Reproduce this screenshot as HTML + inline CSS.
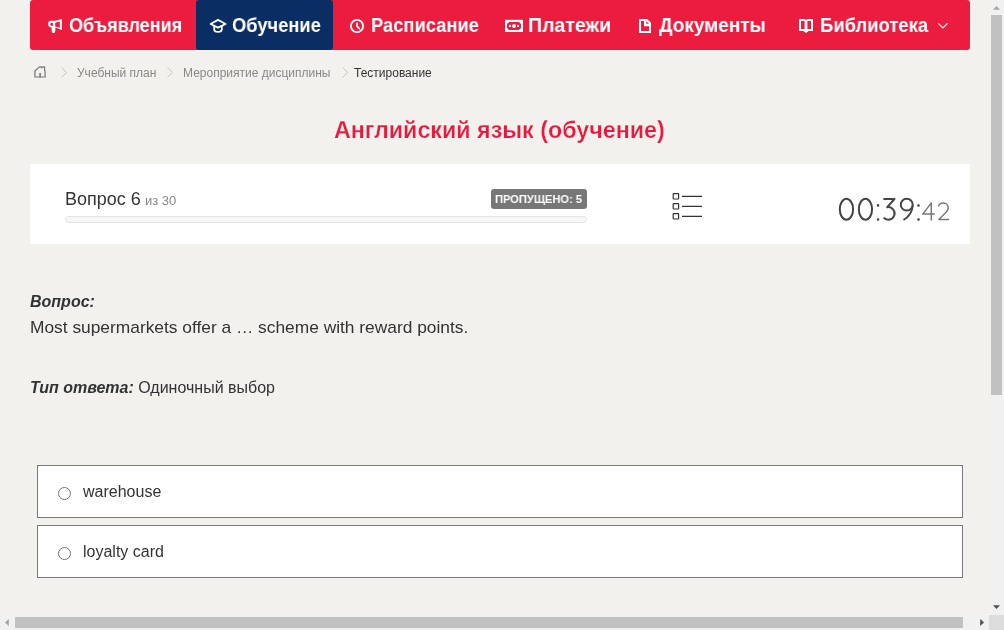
<!DOCTYPE html>
<html><head><meta charset="utf-8">
<style>
html,body{margin:0;padding:0;width:1004px;height:630px;overflow:hidden;background:#f2f1ee;font-family:"Liberation Sans",sans-serif;}
.a{position:absolute;white-space:nowrap;will-change:transform;}
#nav{position:absolute;left:30px;top:0;width:940px;height:50px;background:#ec1c3f;border-radius:3px;}
#act{position:absolute;left:166px;top:0;width:137px;height:50px;background:#0a2d63;border-radius:3px;}
.nt{position:absolute;top:13px;color:#fff;font-weight:bold;font-size:20px;line-height:24px;transform-origin:0 0;}
.bc{position:absolute;top:66px;font-size:12px;line-height:14px;color:#888;}
#title{position:absolute;left:334px;top:116px;color:#e8193c;font-weight:bold;font-size:23px;line-height:28px;transform-origin:0 0;transform:scaleX(1.012);-webkit-text-stroke:0.25px #f2f1ee;}
#panel{position:absolute;left:30px;top:164px;width:940px;height:80px;background:#fff;}
#prog{position:absolute;left:65px;top:216px;width:520px;height:5px;border:1px solid #e3e3e3;border-radius:4px;background:#f7f7f7;}
#badge{position:absolute;left:491px;top:189px;width:96px;height:20px;background:#777;border-radius:3px;}
#vsb{position:absolute;left:989px;top:0;width:15px;height:615px;background:#f1f1f1;}
#vthumb{position:absolute;left:991px;top:15px;width:11px;height:380px;background:#c1c1c1;}
#hsb{position:absolute;left:0;top:615px;width:989px;height:15px;background:#f1f1f1;}
#hthumb{position:absolute;left:15px;top:617px;width:948px;height:11px;background:#c1c1c1;}
#corner{position:absolute;left:989px;top:615px;width:15px;height:15px;background:#dcdcdc;}
.opt{position:absolute;left:37px;width:924px;height:51px;border:1px solid #7a7a7a;background:#fff;}
.radio{position:absolute;left:58px;width:11px;height:11px;border:1px solid #767676;border-radius:50%;background:#fff;}
.ot{position:absolute;font-size:16px;line-height:20px;color:#333;}
svg{position:absolute;left:0;top:0;}
</style></head><body>
<div id="nav">
  <div id="act"></div>
</div>
<div class="nt a" id="n1" style="left:69px;transform:scaleX(0.902)">Объявления</div>
<div class="nt a" id="n2" style="left:232px;transform:scaleX(0.915)">Обучение</div>
<div class="nt a" id="n3" style="left:371px;transform:scaleX(0.917)">Расписание</div>
<div class="nt a" id="n4" style="left:528px;transform:scaleX(0.976)">Платежи</div>
<div class="nt a" id="n5" style="left:659px;transform:scaleX(0.95)">Документы</div>
<div class="nt a" id="n6" style="left:820px;transform:scaleX(0.921)">Библиотека</div>

<div class="bc a" id="b1" style="left:77px">Учебный план</div>
<div class="bc a" id="b2" style="left:183px">Мероприятие дисциплины</div>
<div class="bc a" id="b3" style="left:354px;color:#333">Тестирование</div>

<div class="a" id="title">Английский язык (обучение)</div>

<div id="panel"></div>
<div class="a" id="q6" style="left:65px;top:188px;font-size:18px;line-height:22px;color:#333">Вопрос 6</div>
<div class="a" id="q30" style="left:145px;top:193px;font-size:13px;line-height:15px;color:#888">из 30</div>
<div id="prog"></div>
<div id="badge"></div>
<div class="a" id="bt" style="left:495px;top:192px;font-size:11.5px;line-height:14px;color:#fff;font-weight:bold;transform-origin:0 0;transform:scaleX(0.965)">ПРОПУЩЕНО: 5</div>

<div class="a" id="vq" style="left:30px;top:292px;font-size:16px;line-height:20px;color:#333;font-weight:bold;font-style:italic">Вопрос:</div>
<div class="a" id="qt" style="left:30px;top:317px;font-size:17.35px;line-height:20px;color:#333">Most supermarkets offer a … scheme with reward points.</div>
<div class="a" id="ta" style="left:30px;top:378px;font-size:16px;line-height:20px;color:#333"><b><i>Тип ответа:</i></b> Одиночный выбор</div>

<div class="opt" style="top:465px"></div>
<div class="radio" style="top:487px"></div>
<div class="ot a" id="o1" style="left:83px;top:482px">warehouse</div>
<div class="opt" style="top:525px"></div>
<div class="radio" style="top:547px"></div>
<div class="ot a" id="o2" style="left:83px;top:542px">loyalty card</div>

<div id="vsb"></div><div id="vthumb"></div>
<div id="hsb"></div><div id="hthumb"></div>
<div id="corner"></div>

<svg width="1004" height="630" viewBox="0 0 1004 630">
  <!-- megaphone -->
  <path fill="#fff" fill-rule="evenodd" d="M50.8,20.8 H55.3 L61.9,19 V30 L55.4,27.4 L55.2,31.4 Q55,32.9 53.5,32.9 Q52,32.9 51.8,31.4 L51.4,27.3 H50.8 Q48.2,27.3 48.2,24 Q48.2,20.8 50.8,20.8 Z M51,23 H53 V25.7 H51 Q50.3,25.7 50.3,24.35 Q50.3,23 51,23 Z M55.2,22.7 L59.8,21.5 V27.7 L55.2,26.4 Z"/>
  <!-- grad cap -->
  <g fill="none" stroke="#fff" stroke-width="1.8" stroke-linejoin="round">
    <path d="M210.6,24 L218,19.9 L225.6,24 L218,27.6 Z"/>
    <path d="M214.2,25.8 V29.2 Q214.2,31.9 218,31.9 Q221.8,31.9 221.8,29.2 V25.8"/>
  </g>
  <!-- clock -->
  <g fill="none" stroke="#fff">
    <circle cx="357" cy="26" r="6.1" stroke-width="1.9"/>
    <path d="M357,23.4 V26.2 L359.2,28.5" stroke-width="1.8" stroke-linecap="round"/>
  </g>
  <!-- money -->
  <rect x="505" y="19.8" width="18" height="12.2" fill="#fff"/>
  <path d="M509,22 H519 L521,24 V28 L519,30 H509 L507,28 V24 Z" fill="#ec1c3f"/>
  <rect x="509" y="24.9" width="2" height="2.1" fill="#fff"/>
  <rect x="517" y="24.9" width="2" height="2.1" fill="#fff"/>
  <circle cx="514" cy="26" r="1.9" fill="#fff"/>
  <!-- doc -->
  <path d="M639,19 H647.2 L651,22.8 V33 H639 Z" fill="#fff"/>
  <path d="M641,21 H644 V26.3 H649 V30.9 H641 Z" fill="#ec1c3f"/>
  <path d="M646.3,21.3 L648.8,23.8 H646.3 Z" fill="#ec1c3f"/>
  <!-- book -->
  <path d="M799,19 H804.6 L806,20 L807.4,19 H813 V31 H808.6 L806,33 L803.4,31 H799 Z" fill="#fff"/>
  <rect x="801" y="21" width="3.6" height="8" fill="#ec1c3f"/>
  <rect x="807.4" y="21" width="3.6" height="8" fill="#ec1c3f"/>
  <!-- dropdown chevron -->
  <path d="M938.3,23.4 L942.9,28 L947.5,23.4" fill="none" stroke="#fff" stroke-width="1.2"/>
  <!-- home -->
  <g fill="none" stroke="#777" stroke-width="1.2" stroke-linejoin="round">
    <path d="M34.9,77 V71 L39.4,66.9 H41.1 L41.8,67.8 L42.5,66.9 H44.6 V70.6 L45.1,71.1 V77 Z"/>
  </g>
  <rect x="39.3" y="73" width="1.6" height="4.4" fill="#777"/>
  <!-- breadcrumb chevrons -->
  <g fill="none" stroke="#c4c4c4" stroke-width="1">
    <path d="M61.6,67.6 L66.6,72.5 L61.6,77.3"/>
    <path d="M167.5,67.4 L172.5,72.4 L167.5,77.4"/>
    <path d="M342.6,67.5 L347.6,72.5 L342.6,77.5"/>
  </g>
  <!-- list icon -->
  <g fill="none" stroke="#333" stroke-width="1.2">
    <rect x="673.2" y="193.6" width="5.4" height="5.4" rx="0.5"/>
    <rect x="673.2" y="203.6" width="5.4" height="5.4" rx="0.5"/>
    <rect x="673.2" y="213.6" width="5.4" height="5.4" rx="0.5"/>
    <path d="M682,196.3 H702 M682,206.3 H702 M682,216.3 H702"/>
  </g>
  <!-- timer -->
  <g fill="none" stroke="#444" stroke-width="2" stroke-linejoin="round">
    <ellipse cx="846.45" cy="209.25" rx="6.65" ry="10.45"/>
    <ellipse cx="865.45" cy="209.25" rx="6.6" ry="10.45"/>
    <path d="M883.4,199 H894.5 L887.2,207.2 A6.3,6.3 0 1 1 883.6,217.6"/>
    <circle cx="906.75" cy="204.65" r="5.95"/>
    <path d="M912.7,205.5 Q912,215 903.5,220"/>
  </g>
  <g fill="#444">
    <rect x="876.9" y="204.1" width="2.3" height="2.6" rx="0.8"/>
    <rect x="876.9" y="218.2" width="2.3" height="2.6" rx="0.8"/>
    <rect x="917.3" y="204.2" width="2.4" height="2.6" rx="0.8"/>
    <rect x="917.3" y="218.2" width="2.4" height="2.6" rx="0.8"/>
  </g>
  <g fill="none" stroke="#777" stroke-width="1.5" stroke-linejoin="round">
    <path d="M931.3,220.6 V202.9 L922.8,214.1 H934.8"/>
    <path d="M938.4,206.4 C939.2,204.1 941,203.1 943.3,203.1 C946.3,203.1 948.2,205.3 948.2,207.9 C948.2,209.9 947.2,211.2 945.6,212.7 L938.8,219.5 H949.1"/>
  </g>
  <!-- scrollbar arrows -->
  <path d="M993,9.8 L996.5,6 L1000,9.8 Z" fill="#a3a3a3"/>
  <path d="M993,605.2 L996.5,609 L1000,605.2 Z" fill="#505050"/>
  <path d="M8.8,619 L5,622.5 L8.8,626 Z" fill="#a3a3a3"/>
  <path d="M980.2,619 L984,622.5 L980.2,626 Z" fill="#505050"/>
</svg>
</body></html>
